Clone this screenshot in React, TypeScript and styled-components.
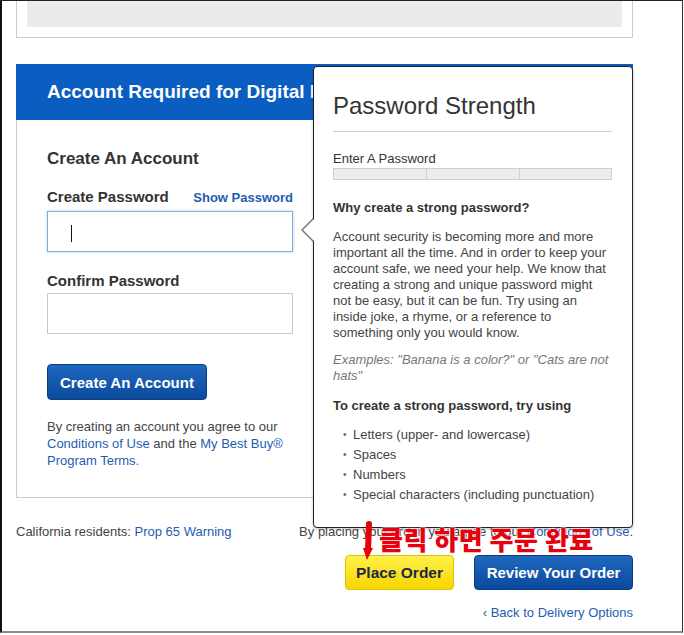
import styled, { createGlobalStyle } from "styled-components"

const GlobalStyle = createGlobalStyle`
  body {
    margin: 0;
    background: #fff;
    font-family: "Liberation Sans", Arial, sans-serif;
    color: #333;
  }
`

const Frame = styled.div`
  position: relative;
  width: 683px;
  height: 633px;
  box-sizing: border-box;
  border-left: 2px solid #111;
  border-top: 1px solid #222;
  border-right: 1px solid #333;
  border-bottom: 2px solid #8a8a8a;
  padding: 0 49px 0 14px;
  overflow: hidden;
`

const TopCard = styled.div`
  border: 1px solid #ccc;
  border-top: none;
  padding: 0 10px 10px;
`

const GrayBlock = styled.div`
  height: 26px;
  background: #ebebeb;
`

const Section = styled.div`
  position: relative;
  margin-top: 26px;
`

const Header = styled.div`
  height: 56px;
  background: #0b5ec1;
  display: flex;
  align-items: center;
  padding-left: 31px;
  color: #fff;
  font-size: 19px;
  font-weight: bold;
  white-space: nowrap;
  overflow: hidden;
`

const Body = styled.div`
  border: 1px solid #ccc;
  border-top: none;
  padding: 29px 0 28px 30px;
`

const Form = styled.div`
  width: 246px;
`

const Heading = styled.div`
  font-size: 17px;
  line-height: 20px;
  font-weight: bold;
  color: #333;
`

const LabelRow = styled.div<{ $top: number }>`
  display: flex;
  justify-content: space-between;
  align-items: baseline;
  margin-top: ${(p) => p.$top}px;
  line-height: 18px;
`

const Label = styled.span`
  font-size: 15px;
  font-weight: bold;
  color: #333;
`

const Link = styled.a<{ $bold?: boolean }>`
  color: #1d5eb0;
  text-decoration: none;
  font-weight: ${(p) => (p.$bold ? "bold" : "normal")};
  cursor: pointer;
`

const SmallLink = styled(Link)`
  font-size: 13px;
`

const Input = styled.div<{ $focus?: boolean; $top: number }>`
  position: relative;
  margin-top: ${(p) => p.$top}px;
  height: 41px;
  box-sizing: border-box;
  border: 1px solid ${(p) => (p.$focus ? "#7eaee0" : "#c8c8c8")};
  box-shadow: ${(p) => (p.$focus ? "0 0 3px rgba(90,150,220,0.45)" : "none")};
  background: #fff;
`

const Caret = styled.div`
  position: absolute;
  left: 23px;
  top: 13px;
  width: 1px;
  height: 17px;
  background: #111;
`

const BlueButton = styled.button<{ $w: number; $h: number }>`
  width: ${(p) => p.$w}px;
  height: ${(p) => p.$h}px;
  border: 1px solid #0a3f86;
  border-radius: 4px;
  background: linear-gradient(#1f68bf, #0a4a9c);
  color: #fff;
  font-family: "Liberation Sans", Arial, sans-serif;
  font-size: 15px;
  font-weight: bold;
  padding: 0;
  cursor: pointer;
`

const CreateButton = styled(BlueButton)`
  margin-top: 30px;
  display: block;
`

const YellowButton = styled.button`
  width: 109px;
  height: 35px;
  border: 1px solid #e0c000;
  border-radius: 4px;
  background: linear-gradient(#fff04a, #f7d600);
  color: #1c2a44;
  font-family: "Liberation Sans", Arial, sans-serif;
  font-size: 15.5px;
  font-weight: bold;
  padding: 0;
  cursor: pointer;
`

const Legal = styled.p`
  margin: 18px 0 0;
  font-size: 13px;
  line-height: 17px;
  color: #444;
  width: 250px;
`

const Popover = styled.div`
  position: absolute;
  left: 297px;
  top: 2px;
  width: 320px;
  height: 462px;
  box-sizing: border-box;
  background: #fff;
  border: 1px solid #222;
  border-radius: 4px;
  padding: 25px 20px 0 19px;
  box-shadow: 0 1px 3px rgba(0, 0, 0, 0.25);

  &::before,
  &::after {
    content: "";
    position: absolute;
    top: 151px;
    border-style: solid;
    border-color: transparent;
  }
  &::before {
    left: -13px;
    border-width: 12px 12px 12px 0;
    border-right-color: #777;
  }
  &::after {
    left: -11px;
    border-width: 12px 12px 12px 0;
    border-right-color: #fff;
  }
`

const PopTitle = styled.div`
  font-size: 24px;
  line-height: 28px;
  color: #333;
  padding-bottom: 11px;
  border-bottom: 1px solid #ccc;
`

const MeterLabel = styled.div`
  margin-top: 19px;
  font-size: 13px;
  line-height: 16px;
  color: #333;
`

const Meter = styled.div`
  margin-top: 1px;
  display: grid;
  grid-template-columns: 1fr 1fr 1fr;
  height: 12px;
  border: 1px solid #cfcfcf;
  box-sizing: border-box;
  background: #ececec;
`

const MeterSeg = styled.div`
  & + & {
    border-left: 1px solid #d0d0d0;
  }
`

const PopHeading = styled.div<{ $top: number }>`
  margin-top: ${(p) => p.$top}px;
  font-size: 13px;
  line-height: 18px;
  font-weight: bold;
  color: #333;
`

const PopText = styled.p<{ $top: number; $muted?: boolean }>`
  margin: ${(p) => p.$top}px 0 0;
  font-size: 13px;
  line-height: 16px;
  color: ${(p) => (p.$muted ? "#777" : "#444")};
  font-style: ${(p) => (p.$muted ? "italic" : "normal")};
`

const List = styled.ul`
  margin: 10px 0 0;
  padding: 0 0 0 20px;
  list-style: none;
`

const Item = styled.li`
  position: relative;
  font-size: 13px;
  line-height: 20px;
  color: #444;

  &::before {
    content: "•";
    position: absolute;
    left: -10px;
    color: #666;
    font-size: 10px;
  }
`

const FooterRow = styled.div`
  margin-top: 25px;
  display: flex;
  justify-content: space-between;
  font-size: 13px;
  line-height: 18px;
  color: #444;
  white-space: nowrap;
`

const Actions = styled.div`
  margin-top: 14px;
  display: flex;
  justify-content: flex-end;
  gap: 20px;
`

const BackRow = styled.div`
  margin-top: 14px;
  text-align: right;
  font-size: 13px;
  line-height: 18px;
`

const Note = styled.div`
  position: absolute;
  left: 360px;
  top: 519px;
  display: flex;
  align-items: flex-start;
  gap: 5px;
`

const NoteText = styled.span`
  margin-top: 2px;
  font-family: "Noto Sans CJK KR", sans-serif;
  font-size: 26px;
  line-height: 34px;
  font-weight: 900;
  color: #e8000d;
  letter-spacing: 0.5px;
  text-shadow: 0 0 2px #fff, 0 0 2px #fff;
`

function Arrow() {
  return (
    <svg width="12" height="42" viewBox="0 0 12 42">
      <path d="M7 4 L6 30" stroke="#e8000d" strokeWidth="6" strokeLinecap="round" fill="none" />
      <path d="M1 28 L11 28 L5 40 Z" fill="#e8000d" />
    </svg>
  )
}

export default function App() {
  return (
    <>
      <GlobalStyle />
      <Frame>
        <TopCard>
          <GrayBlock />
        </TopCard>

        <Section>
          <Header>Account Required for Digital Items</Header>
          <Body>
            <Form>
              <Heading>Create An Account</Heading>
              <LabelRow $top={19}>
                <Label>Create Password</Label>
                <SmallLink $bold>Show Password</SmallLink>
              </LabelRow>
              <Input $focus $top={4}>
                <Caret />
              </Input>
              <LabelRow $top={20}>
                <Label>Confirm Password</Label>
              </LabelRow>
              <Input $top={3} />
              <CreateButton $w={160} $h={36}>Create An Account</CreateButton>
              <Legal>
                By creating an account you agree to our <Link>Conditions of Use</Link> and the{" "}
                <Link>My Best Buy® Program Terms.</Link>
              </Legal>
            </Form>
          </Body>

          <Popover>
            <PopTitle>Password Strength</PopTitle>
            <MeterLabel>Enter A Password</MeterLabel>
            <Meter>
              <MeterSeg />
              <MeterSeg />
              <MeterSeg />
            </Meter>
            <PopHeading $top={19}>Why create a strong password?</PopHeading>
            <PopText $top={12}>
              Account security is becoming more and more important all the time. And in order to keep
              your account safe, we need your help. We know that creating a strong and unique password
              might not be easy, but it can be fun. Try using an inside joke, a rhyme, or a reference to
              something only you would know.
            </PopText>
            <PopText $top={11} $muted>
              Examples: "Banana is a color?" or "Cats are not hats"
            </PopText>
            <PopHeading $top={13}>To create a strong password, try using</PopHeading>
            <List>
              <Item>Letters (upper- and lowercase)</Item>
              <Item>Spaces</Item>
              <Item>Numbers</Item>
              <Item>Special characters (including punctuation)</Item>
            </List>
          </Popover>
        </Section>

        <FooterRow>
          <span>
            California residents: <Link>Prop 65 Warning</Link>
          </span>
          <span>
            By placing your order, you agree to our <Link>Conditions of Use</Link>.
          </span>
        </FooterRow>

        <Actions>
          <YellowButton>Place Order</YellowButton>
          <BlueButton $w={159} $h={35}>Review Your Order</BlueButton>
        </Actions>

        <BackRow>
          <Link>‹ Back to Delivery Options</Link>
        </BackRow>

        <Note>
          <Arrow />
          <NoteText>클릭 하면 주문 완료</NoteText>
        </Note>
      </Frame>
    </>
  )
}
